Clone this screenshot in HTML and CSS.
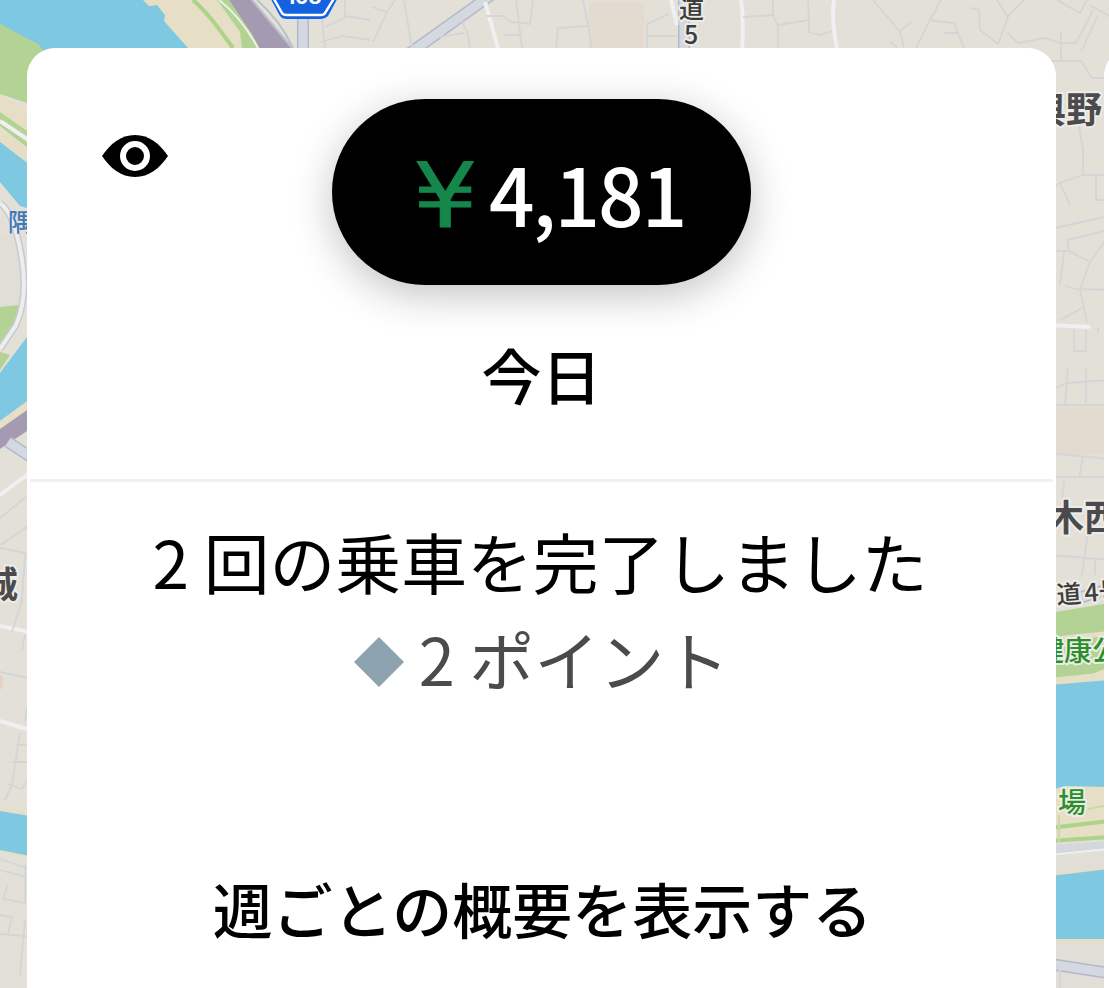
FILE: index.html
```html
<!DOCTYPE html>
<html lang="ja">
  <head>
    <meta charset="UTF-8" />
    <meta name="viewport" content="width=device-width, initial-scale=1.0" />
    <title>今日の売上</title>
    <link rel="stylesheet" href="styles.css">
  </head>
  <body>
    <div class="screen">
      <svg class="map" viewBox="0 0 1109 988" aria-hidden="true">
        <rect class="land" width="1109" height="988" />

        <!-- river and banks, top left -->
        <path class="sand" d="M140 0H215L270 60H190Z" />
        <path class="water" d="M0 0H143L149 6L157 5L165 15L164 21L188 48V80H0Z" />
        <path class="park" d="M0 24L38 44L60 70V110L27 103L0 94Z" />
        <path class="park" d="M217 0H229L262 48H242L240 32Z" />
        <path class="green-line" d="M193 0C207 12 220 30 233 48" />
        <path class="thin-white" d="M219 0C236 13 248 30 258 48" />
        <path class="rail" d="M229 0H251L293 48V60H266L252 34Z" />
        <path class="grey-line" d="M252 0L292 48M257 0Q280 20 293 48" />
        <path class="road-wide" d="M303 12V60" />
        <path class="road-wide-in" d="M303 12V60" />
        <path class="road-wide" d="M410 53L491 -5" />
        <path class="road-wide-in" d="M410 53L491 -5" />
        <path class="road-wide" d="M684 0V60" />
        <path class="road-wide-in" d="M684 0V60" />
        <path class="white-line" d="M485 2L498 48M671 0L677 25M741 0Q744 20 742 48M834 0Q831 20 837 48" />
        <rect class="block" x="589" y="3" width="55" height="50" />
        <path class="lane" d="M345 0V18L325 27M345 16L370 20M320 0L325 48M320 42L343 36L370 40M395 0L387 12L372 7M387 12L373 42M404 0L412 48M460 16L468 35L470 48M440 37L464 33M486 16L504 16L510 22L530 24L533 0M516 0L522 48M504 35H521M556 48L558 28L588 26M583 0L588 25L592 48M647 48V24L669 14M647 36H677M773 0V15L778 26V48M743 17L773 15M778 25L809 20L808 0M809 20V32L820 35L832 31M873 0L900 32L904 48M899 32L911 22M890 42L898 48M941 0L929 22L916 48M929 20L954 23L964 48M944 33H959M970 8L979 10L980 30L998 44L1008 17L997 0M1008 16L1024 0M1008 33L1018 43L1045 38L1060 43H1076L1093 10M1061 32V60M1098 15L1082 50M1057 0L1080 13L1087 0M1090 5L1109 16" />

        <!-- left edge -->
        <path class="sand" d="M0 95L30 110V134L0 112Z" />
        <path class="park" d="M0 112L30 133V150L0 126Z" />
        <path class="white-line" d="M0 121L30 141" />
        <path class="sand" d="M0 129L30 149V165L0 143Z" />
        <path class="water" d="M0 142L30 165V209L20 206L0 182Z" />
        <rect class="block2" y="235" width="22" height="72" />
        <path class="park" d="M0 307L20 305L17 322L0 347Z" />
        <path class="ring-edge" d="M0 203Q15 214 22 260Q28 298 16 325L0 349" />
        <path class="ring" d="M0 203Q15 214 22 260Q28 298 16 325L0 349" />
        <path class="park" d="M0 352L10 355L0 370Z" />
        <path class="water" d="M30 333L0 373V421L30 399Z" />
        <path class="sand" d="M0 421L30 400V411L0 430Z" />
        <path class="rail" d="M0 429L30 408V429L0 449Z" />
        <path class="road-wide" d="M8 442L34 459" />
        <path class="road-wide-in" d="M8 442L34 459" />
        <path class="white-line" d="M0 495L30 473M0 626L30 632M0 721L30 730" />
        <path class="lane" d="M0 518L30 494M0 545L30 525M0 548L30 554M25 555L22 600L12 632M25 635L22 650M0 672L28 678M27 708L25 722M20 733L12 785L5 800M16 745H27M12 762H28M8 784L22 789L27 780M0 859L27 868M0 870L27 877M25 865V903L3 899L8 885M0 915L12 917L8 934M0 934L27 936M25 920L20 975" />
        <path class="sand" d="M0 807L30 813V859L0 852Z" />
        <path class="water" d="M0 811L30 816V856L0 850Z" />
        <ellipse class="hot" cx="-1" cy="682" rx="4" ry="8" />

        <!-- right edge -->
        <rect class="block" x="1050" y="407" width="59" height="48" />
        <path class="lane" d="M1050 61H1081L1092 78H1109M1079 125L1083 150V175L1060 183L1050 190M1060 183L1070 205M1083 175H1109M1096 175V200H1109M1050 229L1109 216M1067 240L1109 230M1067 240L1069 251L1090 262L1109 235M1069 251H1050M1064 251L1060 285M1090 262L1080 289L1087 322M1080 289L1109 290M1065 286L1080 290M1060 320L1082 308M1074 330V351H1086V330M1098 328V333M1050 390L1067 383L1109 380M1068 367L1065 405M1086 367V403M1050 405H1109M1050 453L1109 459M1083 457L1079 478M1050 477H1109M1064 480L1062 500M1088 530L1082 575M1050 555L1109 560M1095 560V575" />
        <path class="white-line" d="M1050 325L1090 327" />
        <path class="road-wide" d="M1082 597L1109 589" />
        <path class="road-wide-in" d="M1082 597L1109 589" />
        <path class="park" d="M1050 613L1109 603V672L1050 678Z" />
        <path class="sand" d="M1050 637L1109 631V636L1050 642Z" />
        <path class="sand" d="M1050 678L1090 675L1109 667V682L1050 687Z" />
        <path class="water" d="M1050 685L1109 680V800H1050Z" />
        <path class="sand" d="M1050 790L1066 786L1109 787V840H1050Z" />
        <path class="green-line" d="M1050 828L1109 821M1050 841L1109 837" />
        <path class="lane-green" d="M1088 809L1109 805M1059 815V842" />
        <path class="road-flat" d="M1050 845L1109 841V850L1050 857Z" />
        <path class="thin-white" d="M1050 855L1109 849" />
        <path class="block2" d="M1050 858L1109 853V870L1050 876Z" />
        <path class="sand" d="M1050 873L1109 867V945H1050Z" />
        <path class="water" d="M1050 876L1109 869V939H1050Z" />
        <path class="block2" d="M1050 942H1109V988H1050Z" />
        <path class="road-wide" d="M1050 964L1109 973" />
        <path class="road-wide-in" d="M1050 964L1109 973" />
        <path class="lane" d="M1060 970V988" />

        <!-- route shield -->
        <path class="shield" d="M266 -10L280 16Q282 19 287 19H321Q325 19 328 16L342 -10Z" />
        <path class="shield-line" d="M270 -8L282 13Q283 15 287 15H321Q324 15 325 13L338 -8" />
        <text class="shield-text" x="304" y="4" text-anchor="middle">108</text>

        <!-- place names -->
        <text class="name road-name" x="679" y="18">道</text>
        <text class="name road-name" x="684" y="44">5</text>
        <text class="name town" x="1030" y="123">與野</text>
        <text class="name town" x="1048" y="531">木西</text>
        <text class="name road-name" x="1057" y="604" transform="rotate(-4 1057 604)">道<tspan dx="3">4号</tspan></text>
        <text class="name town" x="-18" y="598">城</text>
        <text class="name river-name" x="8" y="231">隅</text>
        <text class="name park-name" x="1036" y="661">健康公</text>
        <text class="name park-name" x="1058" y="813">場</text>
      </svg>

      <div class="cards">
        <div class="card">
          <div class="header">
            <svg class="eye" viewBox="0 0 66 42">
              <path d="M0 21C8 9 19 0 33 0S58 9 66 21C58 33 47 42 33 42S8 33 0 21Z" />
              <circle class="eye-ring" cx="33" cy="21" r="12" />
            </svg>
            <div class="pill"><span class="yen">¥</span><span class="amount">4,181</span></div>
            <div class="day">今日</div>
          </div>
          <div class="content">
            <div class="trips">2 回の乗車を完了しました</div>
            <div class="points">
              <svg class="diamond" viewBox="0 0 50 50"><path d="M25 0L50 25L25 50L0 25Z" /></svg>
              <span>2 ポイント</span>
            </div>
            <div class="weekly">週ごとの概要を表示する</div>
          </div>
        </div>
        <div class="card"></div>
      </div>
    </div>
  </body>
</html>
```
FILE: styles.css
```css
body {
  margin: 0;
  font-family: "Noto Sans CJK JP", sans-serif;
  color: #000;
}
.screen {
  width: 1109px;
  height: 988px;
  position: relative;
  overflow: hidden;
}
.map {
  position: absolute;
  top: 0;
  left: 0;
  width: 1109px;
  height: 988px;
}
.cards {
  position: relative;
  display: flex;
  gap: 48px;
  padding: 48px 0 0 27px;
}
.card {
  width: 1029px;
  height: 960px;
  flex-shrink: 0;
  box-sizing: border-box;
  background: #fff;
  border-radius: 28px 28px 0 0;
}
.header {
  height: 434px;
  margin: 0 3px;
  padding-top: 51px;
  box-sizing: border-box;
  display: grid;
  grid-template-columns: 1fr 419px 1fr;
  grid-template-rows: 186px auto;
  border-bottom: 3px solid #f1f1f3;
}
.eye {
  width: 66px;
  height: 42px;
  margin: 36px 0 0 72px;
}
.eye-ring {
  fill: #000;
  stroke: #fff;
  stroke-width: 6px;
}
.pill {
  display: flex;
  align-items: baseline;
  box-sizing: border-box;
  padding-left: 85px;
  background: #000;
  border-radius: 93px;
  box-shadow: 0 10px 42px rgba(0, 0, 0, 0.24);
  line-height: 186px;
  white-space: nowrap;
}
.yen {
  width: 57px;
  margin-right: 15px;
  font-family: "DejaVu Sans", sans-serif;
  font-size: 89px;
  line-height: 1;
  color: #16874b;
  -webkit-text-stroke: 1px #16874b;
  transform: scaleX(1.14);
}
.amount {
  font-size: 80px;
  font-weight: 500;
  letter-spacing: -2px;
  color: #fff;
}
.day {
  grid-column: 1 / 4;
  text-align: center;
  font-size: 60px;
  font-weight: 500;
  line-height: 80px;
  margin-top: 49px;
}
.content {
  text-align: center;
  padding-top: 30px;
}
.trips {
  margin-right: 3px;
  font-size: 65.8px;
  line-height: 98px;
}
.points {
  display: flex;
  align-items: center;
  justify-content: center;
  gap: 15px;
  font-size: 65px;
  line-height: 96px;
  color: #4b4b4b;
}
.diamond {
  width: 50px;
  height: 50px;
  margin-top: 7px;
  fill: #8ea3b0;
}
.weekly {
  margin: 157px 0 0 2px;
  font-size: 60px;
  font-weight: 500;
  line-height: 90px;
}

/*Map*/
.land { fill: #e2e0d7; }
.sand { fill: #e6dfc6; }
.water { fill: #7ec8e1; }
.park { fill: #b2d393; }
.rail { fill: #a49bb3; }
.block { fill: #e3dad0; }
.block2 { fill: #e1ddd7; }
.hot { fill: #e9cfc1; }
.road-flat { fill: #d5d7df; }
.green-line,
.white-line,
.thin-white,
.grey-line,
.lane,
.lane-green,
.ring,
.ring-edge,
.road-wide,
.road-wide-in {
  fill: none;
}
.green-line { stroke: #add389; stroke-width: 4px; }
.white-line { stroke: #f0f0f3; stroke-width: 4px; }
.thin-white { stroke: #f0f0ea; stroke-width: 2px; }
.grey-line { stroke: #b9c0cb; stroke-width: 2px; }
.lane { stroke: #d4d5d6; stroke-width: 1.8px; }
.lane-green { stroke: #c9d9a9; stroke-width: 2px; }
.ring { stroke: #eeeeef; stroke-width: 4px; }
.ring-edge { stroke: #c9cacf; stroke-width: 7px; }
.road-wide { stroke: #b3b9cb; stroke-width: 12px; }
.road-wide-in { stroke: #d3d8e1; stroke-width: 9px; }
.shield { fill: #1462df; }
.shield-line {
  fill: none;
  stroke: #fff;
  stroke-width: 2.5px;
}
.shield-text {
  font-family: Inter, sans-serif;
  font-size: 20px;
  font-weight: 700;
  fill: #fff;
}
.name {
  font-weight: 700;
  paint-order: stroke;
  stroke: #eeece6;
  stroke-width: 4px;
  stroke-linejoin: round;
}
.road-name { font-size: 25px; font-weight: 500; fill: #3d3d40; }
.town { font-size: 36px; fill: #4b4b4e; }
.river-name { font-size: 24px; font-weight: 500; fill: #4379ba; stroke: none; }
.park-name { font-size: 28px; font-weight: 500; fill: #2b902c; }
```
